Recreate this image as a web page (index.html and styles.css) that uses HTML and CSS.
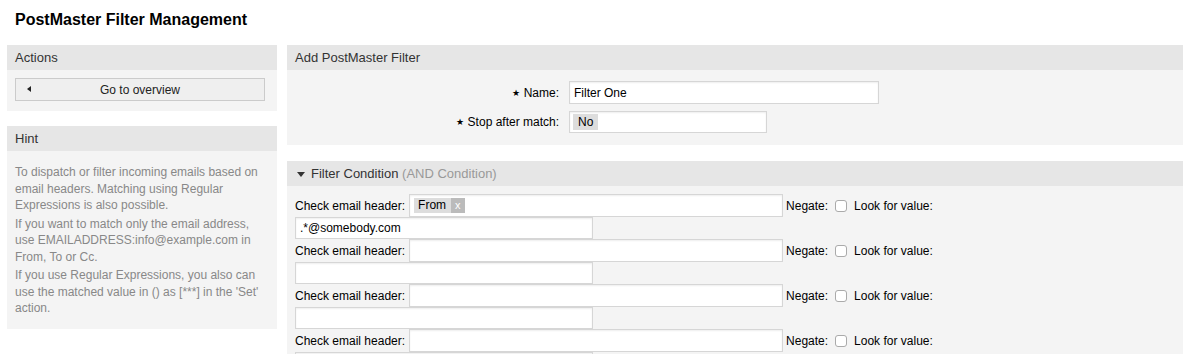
FILE: index.html
```html
<!DOCTYPE html>
<html lang="en">
<head>
  <meta charset="UTF-8" />
  <title>PostMaster Filter Management</title>
  <link rel="stylesheet" href="styles.css">
</head>
<body>
  <div class="page">
    <h1 class="page-title">PostMaster Filter Management</h1>

    <div class="layout">
      <aside class="sidebar">
        <div class="box">
          <div class="box-head">Actions</div>
          <div class="box-body actions">
            <button class="btn-back"><span class="arrow-left"></span>Go to overview</button>
          </div>
        </div>

        <div class="box">
          <div class="box-head">Hint</div>
          <div class="box-body hint">
            <p>To dispatch or filter incoming emails based on email headers. Matching using Regular Expressions is also possible.</p>
            <p>If you want to match only the email address, use EMAILADDRESS:info@example.com in From, To or Cc.</p>
            <p>If you use Regular Expressions, you also can use the matched value in () as [***] in the 'Set' action.</p>
          </div>
        </div>
      </aside>

      <main class="content">
        <div class="box">
          <div class="box-head">Add PostMaster Filter</div>
          <div class="box-body filter-form">
            <label class="form-label"><span class="star">★</span> Name:</label>
            <input class="field name-field" type="text" value="Filter One" />
            <label class="form-label"><span class="star">★</span> Stop after match:</label>
            <div class="field select-field"><span class="chip">No</span></div>
          </div>
        </div>

        <div class="box">
          <div class="box-head"><span class="arrow-down"></span>Filter Condition <span class="muted">(AND Condition)</span></div>
          <div class="box-body conditions">
            <div class="cond">
              <div class="cond-line">
                <span class="cond-label">Check email header:</span>
                <div class="field header-field"><span class="tag">From<span class="tag-x">x</span></span></div>
                <span class="cond-label">Negate:</span>
                <span class="check"></span>
                <span class="cond-label">Look for value:</span>
              </div>
              <input class="field value-field" type="text" value=".*@somebody.com" />
            </div>
            <div class="cond">
              <div class="cond-line">
                <span class="cond-label">Check email header:</span>
                <div class="field header-field"></div>
                <span class="cond-label">Negate:</span>
                <span class="check"></span>
                <span class="cond-label">Look for value:</span>
              </div>
              <input class="field value-field" type="text" value="" />
            </div>
            <div class="cond">
              <div class="cond-line">
                <span class="cond-label">Check email header:</span>
                <div class="field header-field"></div>
                <span class="cond-label">Negate:</span>
                <span class="check"></span>
                <span class="cond-label">Look for value:</span>
              </div>
              <input class="field value-field" type="text" value="" />
            </div>
            <div class="cond">
              <div class="cond-line">
                <span class="cond-label">Check email header:</span>
                <div class="field header-field"></div>
                <span class="cond-label">Negate:</span>
                <span class="check"></span>
                <span class="cond-label">Look for value:</span>
              </div>
              <input class="field value-field" type="text" value="" />
            </div>
          </div>
        </div>
      </main>
    </div>
  </div>
</body>
</html>
```

FILE: styles.css
```css
* { margin: 0; padding: 0; box-sizing: border-box; }

body {
  background: #fff;
  color: #000;
  font-family: "Liberation Sans", Arial, sans-serif;
  font-size: 12px;
  overflow: hidden;
}

.page {
  padding: 0 16px 0 7px;
}

.page-title {
  font-size: 16px;
  font-weight: bold;
  line-height: 18px;
  padding: 11px 8px 0;
  height: 45px;
}

.layout {
  display: flex;
  gap: 10px;
  align-items: flex-start;
}

.sidebar {
  width: 270px;
  flex: none;
  display: flex;
  flex-direction: column;
  gap: 15px;
}

.content {
  flex: 1;
  display: flex;
  flex-direction: column;
  gap: 16px;
}

.box-head {
  background: #e6e6e6;
  color: #333;
  font-size: 13px;
  height: 25px;
  line-height: 25px;
  padding: 0 8px;
}

.box-head .muted {
  color: #999;
}

.box-body {
  background: #f4f4f4;
}

/* actions */
.actions {
  padding: 8px 12px 10px 8px;
}

.btn-back {
  position: relative;
  width: 100%;
  height: 23px;
  background: #efefef;
  border: 1px solid #cbcbcb;
  font-family: inherit;
  font-size: 12px;
  color: #222;
}

.arrow-left {
  position: absolute;
  left: 11px;
  top: 7px;
  border-top: 3.5px solid transparent;
  border-bottom: 3.5px solid transparent;
  border-right: 4px solid #222;
}

/* hint */
.hint {
  padding: 13px 8px 12px;
  color: #888;
  line-height: 16.5px;
}

.hint p + p {
  margin-top: 2px;
}

/* inputs */
.field {
  background: #fff;
  border: 1px solid #d6d6d6;
  box-shadow: inset 0 1px 2px rgba(0, 0, 0, 0.07);
  font-family: inherit;
  font-size: 12px;
  color: #000;
  outline: none;
}

input.field {
  padding: 0 4px;
}

/* add filter form */
.filter-form {
  display: grid;
  grid-template-columns: 272px auto;
  column-gap: 10px;
  row-gap: 7px;
  align-items: center;
  justify-items: start;
  padding: 11px 0 12px;
}

.form-label {
  justify-self: end;
  font-size: 12px;
}

.star {
  font-size: 9px;
  vertical-align: 1px;
}

.name-field {
  width: 310px;
  height: 23px;
}

.select-field {
  width: 198px;
  height: 22px;
  display: flex;
  align-items: center;
  padding-left: 3px;
}

.chip {
  background: #ddd;
  padding: 1px 5px;
  line-height: 14px;
}

/* conditions */
.arrow-down {
  display: inline-block;
  border-left: 4.5px solid transparent;
  border-right: 4.5px solid transparent;
  border-top: 5px solid #333;
  margin: 0 6px 1px 2px;
  vertical-align: middle;
}

.conditions {
  padding: 8px 8px 8px;
}

.cond-line {
  display: flex;
  align-items: center;
  height: 23px;
}

.header-field {
  width: 374px;
  height: 23px;
  margin: 0 3px 0 4px;
  display: flex;
  align-items: center;
  padding-left: 4px;
}

.check {
  width: 12px;
  height: 12px;
  border: 1px solid #aaa;
  border-radius: 3px;
  background: #fff;
  margin: 0 7px 0 7px;
}

.tag {
  display: flex;
  align-items: center;
  background: #ddd;
  height: 15px;
  line-height: 15px;
  padding-left: 4px;
}

.tag-x {
  background: #bbb;
  color: #fff;
  margin-left: 5px;
  padding: 0 4px;
  font-size: 11px;
}

.value-field {
  display: block;
  width: 298px;
  height: 22px;
}
```
